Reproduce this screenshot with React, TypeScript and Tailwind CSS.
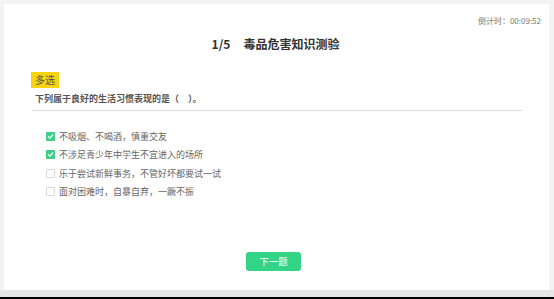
import React from "react";

const options = [
  { text: "不吸烟、不喝酒，慎重交友", checked: true },
  { text: "不涉足青少年中学生不宜进入的场所", checked: true },
  { text: "乐于尝试新鲜事务，不管好坏都要试一试", checked: false },
  { text: "面对困难时，自暴自弃，一蹶不振", checked: false },
];

function Check({ checked }: { checked: boolean }) {
  if (checked) {
    return (
      <span className="w-[9px] h-[9px] rounded-[1px] bg-[#3ccf87] flex items-center justify-center">
        <svg width="7" height="7" viewBox="0 0 10 10">
          <path d="M2 5.2 L4.2 7.3 L8.2 2.8" stroke="#fff" strokeWidth="1.8" fill="none" strokeLinecap="round" strokeLinejoin="round" />
        </svg>
      </span>
    );
  }
  return <span className="w-[9px] h-[9px] rounded-[1px] border border-[#d9d9d9] bg-white" />;
}

export default function App() {
  return (
    <div
      className="w-[554px] h-[299px] bg-[#f3f3f3] flex flex-col overflow-hidden"
      style={{ fontFamily: '"Noto Sans CJK SC", "Noto Sans", sans-serif' }}
    >
      <div className="pt-[4px] px-[4px] pr-[5px]">
        <div className="h-[286px] bg-white flex flex-col">
          <div className="pt-[11px] pr-[8px] text-right text-[8px] leading-[12px] text-[#7a7a7a]">
            倒计时：00:09:52
          </div>
          <div className="mt-[8px] text-center text-[12px] leading-[18px] font-bold text-[#333] pr-[2px]">
            1/5<span className="inline-block w-[13px]" />毒品危害知识测验
          </div>
          <div className="pl-[27px] pr-[27px] mt-[19px] flex flex-col">
            <div className="self-start h-[16px] px-[4px] bg-[#f7d40d] text-[10px] leading-[16px] text-[#555]">
              多选
            </div>
            <div className="mt-[4px] ml-[4px] text-[9px] leading-[14px] font-bold text-[#555]">
              下列属于良好的生活习惯表现的是（　）。
            </div>
            <div className="mt-[4px] ml-[1px] h-px bg-[#dcdcdc]" />
            <div className="mt-[16px] pl-[15px] flex flex-col">
              {options.map((o) => (
                <div key={o.text} className="h-[18.5px] flex items-center gap-[4px]">
                  <Check checked={o.checked} />
                  <span className="text-[9px] text-[#666]">{o.text}</span>
                </div>
              ))}
            </div>
          </div>
          <div className="mt-[51px] flex justify-center pr-[6px]">
            <button className="w-[55px] h-[19px] rounded-[3px] bg-[#33d486] text-white text-[9.5px] leading-[19px]">
              下一题
            </button>
          </div>
        </div>
      </div>
      <div className="h-[7px] bg-[#e6e6e6]" />
      <div className="flex-1 bg-black" />
    </div>
  );
}
